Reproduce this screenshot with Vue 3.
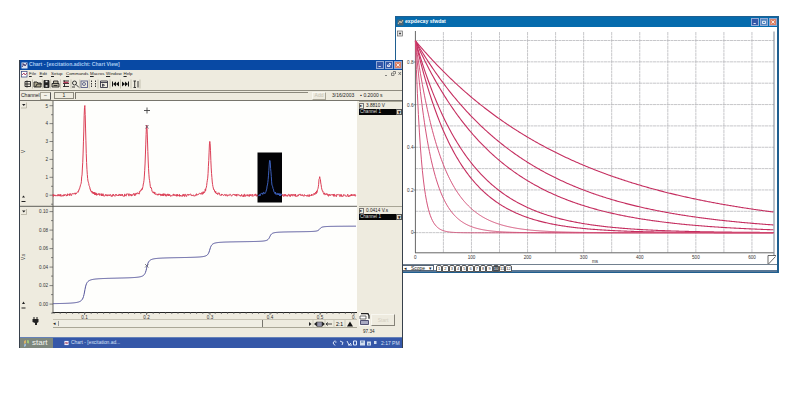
<script setup>
// Two desktop windows: exponential decay plot behind, chart recorder in front

const menus = [
  { t: "File", w: 10.5 },
  { t: "Edit", w: 11.5 },
  { t: "Setup", w: 15 },
  { t: "Commands", w: 24 },
  { t: "Macros", w: 16 },
  { t: "Window", w: 17.5 },
  { t: "Help", w: 10 },
];

// small repeatable noise so the trace always looks the same
let seed = 7;
const noise = () => {
  seed = (seed * 16807) % 2147483647;
  return seed / 2147483647 - 0.5;
};

const peaks = [
  { x: 84.7, h: 90, step: 26 },
  { x: 146.7, h: 71, step: 20.7 },
  { x: 209.8, h: 54, step: 16 },
  { x: 269.8, h: 36, step: 10 },
  { x: 319.7, h: 18.5, step: 5.6 },
];

const trace = (from, to) => {
  const pts = [];
  for (let x = from; x <= to; x += 0.35) {
    let y = 195.6 + noise() * 2.6;
    for (const p of peaks) y -= (p.h * 2.2) / (2.2 + (x - p.x) ** 2);
    pts.push(x.toFixed(2) + "," + y.toFixed(2));
  }
  return pts.join(" ");
};
const pulseTrace = trace(53, 356);
const selectedTrace = trace(258, 281.5);

const integral = (() => {
  const pts = [];
  for (let x = 53; x <= 356; x += 0.5) {
    let y = 304.2;
    for (const p of peaks) y -= p.step * (0.5 + Math.atan((x - p.x) / 1.5) / Math.PI);
    pts.push(x + "," + y.toFixed(2));
  }
  return pts.join(" ");
})();

const upperTicks = [5, 4, 3, 2, 1, 0].map((n) => ({ n, y: 195.2 - n * 17.9 }));
const lowerTicks = ["0.10", "0.08", "0.06", "0.04", "0.02", "0.00"].map((n, i) => ({
  n,
  y: 211.6 + i * 18.5,
}));
const timeTicks = [
  { n: "0.1", x: 84.5 },
  { n: "0.2", x: 146.5 },
  { n: "0.3", x: 210 },
  { n: "0.4", x: 270 },
  { n: "0.5", x: 320 },
  { n: "0.", x: 354 },
];
const minorTimes = Array.from({ length: 49 }, (_, i) => 54 + i * 6.2).filter((x) => x < 356);

// decay plot
const decays = [161, 112, 86, 55.3, 44.3, 27, 16.3, 6.2].map((tau) => {
  const pts = [];
  for (let x = 0; x <= 358.5; x += 1) {
    pts.push(415.4 + x + "," + (232.8 - 192 * Math.exp(-x / tau)).toFixed(2));
  }
  return pts.join(" ");
});
const gridX = Array.from({ length: 12 }, (_, i) => 443.4 + i * 28.05);
const gridY = Array.from({ length: 10 }, (_, i) => 40.5 + i * 21.35);
const decayY = [
  { n: "0.8", y: 62 },
  { n: "0.6", y: 104.7 },
  { n: "0.4", y: 147.3 },
  { n: "0.2", y: 190 },
  { n: "0", y: 232.6 },
];
const decayX = [0, 100, 200, 300, 400, 500, 600];
const pages = Array.from({ length: 12 }, (_, i) => i + 1);
</script>

<template>
  <div class="desktop">
    <section class="win decay">
      <header class="bar">
        <svg class="appicon" viewBox="0 0 7 7">
          <rect x="0.5" y="0.5" width="6" height="6" fill="#4b6675" />
          <path d="M1 5L3 2l1 2 2-3" stroke="#d5c4ae" fill="none" />
        </svg>
        <span class="caption">expdecay sfwdat</span>
        <span class="btn"><svg viewBox="0 0 8 8"><path d="M2 6h3" /></svg></span>
        <span class="btn lit"><svg viewBox="0 0 8 8"><path d="M2 3h4v3H2z" /></svg></span>
        <span class="btn close"><svg viewBox="0 0 8 8"><path d="M2 2l4 4M6 2L2 6" /></svg></span>
      </header>

      <svg class="plot" viewBox="397 28 379 236">
        <rect x="397.5" y="31" width="5" height="5" fill="#e8e8e8" stroke="#666" stroke-width="0.7" />
        <path d="M399 33h2l-1 1.4z" fill="#222" stroke="#222" stroke-width="0.4" />
        <g class="grid">
          <line v-for="x in gridX" :key="'x' + x" :x1="x" :x2="x" y1="32" y2="253" />
          <line v-for="y in gridY" :key="'y' + y" x1="415" x2="774" :y1="y" :y2="y" />
        </g>
        <path d="M415.4 31V253M415 252.8H774" class="axis" />
        <path d="M774 31.5V256" stroke="#7d8794" stroke-width="1" />
        <polyline v-for="(d, i) in decays" :key="i" :points="d" class="decayline" :class="{ faint: i > 4 }" />
        <g class="num">
          <text v-for="t in decayY" :key="t.n" x="413.5" :y="t.y + 1.8" text-anchor="end">{{ t.n }}</text>
          <text v-for="n in decayX" :key="n" :x="415.4 + n * 0.561" y="258.8" text-anchor="middle">{{ n }}</text>
          <text x="595" y="262.6" text-anchor="middle">ms</text>
        </g>
        <path v-for="t in decayY" :key="'t' + t.n" :d="`M413.5 ${t.y}h2`" stroke="#555" stroke-width="0.7" />
        <path d="M768 264v-8.5h8M768.5 264l7-7.5" fill="none" stroke="#444" stroke-width="0.8" />
      </svg>

      <footer class="pages">
        <span class="scope"><i>◂</i> Scope <i class="arrow">▾</i></span>
        <span v-for="p in pages" :key="p" class="page" :class="{ on: p === 10 }">{{ p }}</span>
      </footer>
    </section>

    <section class="win chart">
      <header class="bar">
        <svg class="appicon" viewBox="0 0 7 7">
          <rect x="0.5" y="0.5" width="6" height="6" fill="#dce3ef" />
          <path d="M1 5l2-3 1 2 2-3M1 2h2" stroke="#423c72" fill="none" />
        </svg>
        <span class="caption">Chart - [excitation.adicht: Chart View]</span>
        <span class="btn"><svg viewBox="0 0 8 8"><path d="M2 6h3" /></svg></span>
        <span class="btn"><svg viewBox="0 0 8 8"><path d="M2 4h3v2H2zM4 2h2v2" /></svg></span>
        <span class="btn close"><svg viewBox="0 0 8 8"><path d="M2 2l4 4M6 2L2 6" /></svg></span>
      </header>

      <nav class="menu">
        <svg class="appicon" viewBox="0 0 7 7">
          <rect x="0.5" y="0.5" width="5.5" height="5.5" fill="#fff" stroke="#33417c" stroke-width="0.7" />
          <path d="M1 4l2-2 1 2 2-2" stroke="#a02f50" stroke-width="0.8" fill="none" />
        </svg>
        <span v-for="m in menus" :key="m.t" :style="{ width: m.w + 'px' }"><u>{{ m.t[0] }}</u>{{ m.t.slice(1) }}</span>
        <svg class="mdi" viewBox="0 0 18 8">
          <path d="M1 5.5h2M7.5 3h2.5v2.5H7.5zM9 1.5h2.5v2.5M14.5 2l2.5 3M17 2l-2.5 3" />
        </svg>
      </nav>

      <div class="tools">
        <svg viewBox="0 0 120 10">
          <g fill="none" stroke="#222" stroke-width="0.9">
            <path d="M3 1.5v7M1 2.5h5.5v5H1zM1 5h5.5" />
            <path d="M10 3h3l1 1h3v4h-7zM11.5 8l1.500-3h5" fill="#aaa58c" />
            <path d="M20 1.500h5v7h-5z" fill="#222" />
            <path d="M21.500 2.500h2M21.500 7h2" stroke="#eee" stroke-width="1.600" />
            <path d="M28 4.500h7v3.500h-7zM29.500 4.500V2H34v2.500M29.500 6.500h4" fill="#bdb8a5" />
            <path d="M39 2h6M39 4.500h6M39 7.500h6M40.500 1.500V8" />
            <path d="M39.500 3.500h5" stroke="#bd3d5d" stroke-width="1.400" />
            <circle cx="50.500" cy="4" r="2" />
            <path d="M52 5.500l3 3M48 8h3" />
            <rect x="57" y="2" width="6.500" height="6.500" stroke="#555b87" />
            <circle cx="60" cy="5" r="1.500" stroke="#555b87" />
            <path d="M67.500 1.500v7M71.500 1.500v7" stroke-dasharray="1.500 1" />
            <path d="M76.500 2h7v6.500h-7zM76.500 3.500h7M78.500 5l2 1.200-2 1.200z" stroke="#334" />
            <path d="M114 2v6.500M109.500 2h2.500M110.700 2v6M109.500 8.500h2.500" />
          </g>
          <g fill="#111">
            <path d="M88 2.500h1v5h-1zM92 2.500v5l-3-2.500zM95 2.500v5L92 5z" />
            <path d="M98 2.500v5l3-2.500zM101 2.500v5l3-2.500zM104 2.500h1v5h-1z" />
          </g>
          <path d="M8.500 0.500v9M18.300 0.500v9M26.700 0.500v9M36.500 0.500v9M47 0.500v9M55.800 0.500v9M65.200 0.500v9M74 0.500v9M86 0.500v9M96.500 0.500v9M107 0.500v9M116 0.500v9" stroke="#aaa694" stroke-width="0.600" />
        </svg>
      </div>

      <div class="channel">
        <span class="lbl">Channel:</span>
        <span class="pick">–</span>
        <span class="one">1</span>
        <span class="comment"></span>
        <span class="add">Add</span>
        <span class="date">3/16/2003</span>
        <span class="rate">▪ 0.2000 s</span>
      </div>

      <div class="work">
        <svg class="graphs" viewBox="20 101 337 218">
          <rect x="53" y="101" width="304" height="211" fill="#fefefc" />
          <path d="M20 206.3H357" stroke="#4d4d48" stroke-width="0.9" />
          <path d="M53 101V312.5" stroke="#55554f" stroke-width="0.9" />
          <path d="M52.5 312.5H357" stroke="#222" stroke-width="1" />

          <g class="num">
            <text v-for="t in upperTicks" :key="t.n" x="48" :y="t.y + 1.8" text-anchor="end">{{ t.n }}</text>
            <text v-for="t in lowerTicks" :key="t.n" x="48" :y="t.y + 1.7" text-anchor="end">{{ t.n }}</text>
            <text v-for="t in timeTicks" :key="t.n" :x="t.x" y="318.8" text-anchor="middle">{{ t.n }}</text>
            <text transform="translate(24.5 153) rotate(-90)">V</text>
            <text transform="translate(24.5 260) rotate(-90)">V.s</text>
          </g>
          <g stroke="#555" stroke-width="0.7">
            <path v-for="t in upperTicks" :key="'u' + t.n" :d="`M49.5 ${t.y}h3.5M51 ${t.y + 9}h2`" />
            <path v-for="t in lowerTicks" :key="'l' + t.n" :d="`M49.5 ${t.y}h3.5M51 ${t.y + 9}h2`" />
            <path v-for="x in minorTimes" :key="x" :d="`M${x} 312v2`" />
            <path v-for="t in timeTicks" :key="'x' + t.n" :d="`M${t.x} 312v3`" />
          </g>

          <!-- channel menus and scale arrows -->
          <g fill="#222">
            <path d="M22 104h3.5l-1.7 2zM22 210.5h3.5l-1.7 2z" />
            <path d="M22 197.5l1.5-2 1.5 2zM21.5 201h4v1h-4zM22 304l1.5-2.5 1.5 2.5zM21.5 307.5h4v1h-4z" />
          </g>
          <path d="M21 108h5.5v-5.5M21 214.5h5.5V209" fill="none" stroke="#aaa696" stroke-width="0.7" />

          <polyline :points="pulseTrace" class="pulse" />
          <rect x="257.5" y="152.5" width="24.5" height="50" fill="#020205" />
          <polyline :points="selectedTrace" class="pulse sel" />
          <polyline :points="integral" class="integral" />
          <path d="M144 110.5h6M147 107.5v6" stroke="#444" stroke-width="0.9" />
          <path d="M145.500 125l3 3.500M148.500 125l-3 3.500M145 264l3.500 3.500M148.500 264l-3.500 3.500" stroke="#556" stroke-width="0.7" />
        </svg>

        <aside class="side">
          <div v-for="v in ['3.8810 V', '0.0414 V.s']" :key="v" class="readout">
            <div class="value"><b>▸</b>{{ v }}</div>
            <div class="chan"><span>Channel 1</span><b>▾</b></div>
          </div>
        </aside>
      </div>

      <div class="lower">
        <svg class="plug" viewBox="0 0 33 9">
          <path d="M13.5 1h1v2h2V1h1v2h1v3l-1.5 1v2h-2V7l-2.500-1V3h1z" fill="#222" />
        </svg>
        <div class="scroll">
          <span class="left">◂</span>
          <span class="thumb"></span>
          <svg viewBox="0 0 50 8">
            <path d="M2 2v4l2.5-2zM7 4l3-2.5v5zM15 1.5v5L18 4z" fill="#222" />
            <path d="M10 2h5v4.500h-5z" fill="#9292a8" stroke="#444" stroke-width="0.6" />
            <path d="M19 4h6M21 2.5L19 4l2 1.5" stroke="#333" stroke-width="0.9" fill="none" />
            <text x="29" y="6" font-size="5">2:1</text>
            <path d="M40 6.5l3-5 3 5z" fill="#111" />
            <path d="M6 0v8M18 0v8M27 0v8M38 0v8" stroke="#bbb8a8" stroke-width="0.6" />
          </svg>
        </div>
      </div>
      <div class="status"><span>97.34</span></div>
      <div class="start">
        <svg viewBox="0 0 11 13">
          <rect width="11" height="13" fill="#faf9f4" />
          <path d="M2 0.700h7l1 2v3" fill="none" stroke="#222" stroke-width="1.3" />
          <path d="M1 3h6v3H1z" fill="#fff" stroke="#333" stroke-width="0.7" />
          <path d="M1.5 7.5h8v4h-8z" fill="#a9aac3" stroke="#525274" />
        </svg>
        <span>Start</span>
      </div>

      <footer class="task">
        <span class="startbtn">
          <svg viewBox="0 0 7 8"><path d="M1 2l2-1v3l-2 1z" fill="#d9b269" /><path d="M4 1l2 .5v3l-2-.5z" fill="#a2c779" /><path d="M1 5.5l2-1V7l-2 1z" fill="#9abbd6" /></svg>
          start
        </span>
        <span class="running">
          <svg viewBox="0 0 6 6"><path d="M0.5 0.5h5v5h-5z" fill="#eef" /><path d="M1 4l1.5-2 1 2 1.5-2" stroke="#a13550" fill="none" /></svg>
          Chart - [excitation.ad...
        </span>
        <svg class="tray" viewBox="0 0 46 8">
          <g fill="none" stroke="#dce7fa" stroke-width="1">
            <path d="M3 1.5L1 4l2 2.5M3 3h1.5M8 2l3 1.5-1 2.5" />
            <path d="M15 2l2 4 2-2M16 6h4M21.5 2h3v4h-3z" />
          </g>
          <path d="M28 1.5h5v5h-5zM35 2.5h4v4h-4zM42 2h2.5v3H42z" fill="#cfdcef" />
          <path d="M29 3h2.5M36 5h2" stroke="#436b9f" />
        </svg>
        <span class="clock">2:17 PM</span>
      </footer>
    </section>
  </div>
</template>

<style>
body {
  margin: 0;
  background: #fff;
}
</style>

<style scoped>
.desktop {
  position: relative;
  width: 800px;
  height: 400px;
  overflow: hidden;
  background: #fff;
  font-family: "Liberation Sans", Arial, sans-serif;
  font-size: 5px;
  line-height: 1;
  color: #222;
}
.desktop * {
  box-sizing: border-box;
}
svg {
  display: block;
  flex: none;
}
.win {
  position: absolute;
  display: flex;
  flex-direction: column;
  overflow: hidden;
  white-space: nowrap;
}
.decay {
  left: 395px;
  top: 16px;
  width: 384px;
  height: 257px;
  background: #fff;
  border: 1px solid #1f5f90;
  border-width: 1px 2px 1px 1px;
}
.chart {
  left: 19px;
  top: 60px;
  width: 384px;
  height: 288px;
  background: #eeebdf;
  border: 1px solid #37404b;
  border-width: 0 1px 0 1px;
}

/* title bars */
.bar {
  display: flex;
  flex: none;
  align-items: center;
  height: 10px;
  color: #fff;
  font-weight: 700;
}
.decay .bar {
  background: #056bad;
}
.chart .bar {
  background: #0849a4;
}
.appicon {
  width: 7px;
  height: 7px;
  margin: 0 1px;
}
.caption {
  flex: 1;
  font-size: 5.1px;
}
.chart .caption {
  color: #a9ccf2;
}
.btn {
  width: 8px;
  height: 8px;
  margin-right: 1px;
  background: #3558a8;
  border: 0.5px solid #91a9d6;
}
.btn.lit {
  background: #5585bf;
}
.btn.close {
  background: #dc8064;
  margin-right: 0;
}
.btn svg {
  width: 100%;
  height: 100%;
}
.btn path {
  fill: none;
  stroke: #fff;
  stroke-width: 1.1;
}

/* decay window */
.plot {
  width: 379px;
  height: 236px;
  margin: 1px 0 0 1px;
}
.grid line {
  stroke: #b9b9bd;
  stroke-width: 0.8;
  stroke-dasharray: 3 0.5;
}
.axis {
  stroke: #666;
  stroke-width: 1;
  fill: none;
}
.decayline {
  fill: none;
  stroke: #c52f60;
  stroke-width: 1.1;
}
.decayline.faint {
  stroke: #d14a73;
  stroke-width: 0.95;
}
.num text {
  font-size: 4.6px;
  fill: #333;
}
.pages {
  display: flex;
  flex: 1;
  align-items: center;
  padding-left: 6px;
  background: linear-gradient(#71808f 0, #71808f 1px, #fff 1px, #fff 6px, #587796 6px);
}
.scope {
  display: flex;
  align-items: center;
  justify-content: space-between;
  width: 32px;
  height: 6px;
  margin-right: 2px;
  padding: 0 1px;
  border: 1px solid #566475;
  background: #fff;
}
.scope i {
  font-style: normal;
}
.page {
  width: 6.3px;
  height: 7px;
  border: 0.5px solid #555;
  border-radius: 2px 2px 0 0;
  background: #fff;
  font-size: 4px;
  line-height: 6px;
  text-align: center;
}
.page.on {
  background: #3e4855;
  color: #fff;
}

/* chart window chrome */
.menu {
  display: flex;
  flex: none;
  align-items: center;
  height: 8px;
  font-size: 4.4px;
}
.menu u {
  text-decoration-thickness: 0.4px;
}
.mdi {
  width: 18px;
  height: 8px;
  margin-left: auto;
}
.mdi path {
  fill: none;
  stroke: #555;
  stroke-width: 0.7;
}
.tools {
  flex: none;
  height: 13px;
  padding: 1px 0 0 4px;
  border-bottom: 1px solid #8f8c80;
}
.tools svg {
  width: 120px;
  height: 10px;
}
.channel {
  display: flex;
  flex: none;
  align-items: center;
  height: 10px;
  border-bottom: 1px solid #77756c;
}
.lbl {
  width: 20px;
  padding-left: 1px;
}
.pick {
  width: 11px;
  height: 8px;
  border: 1px solid #aaa697;
  border-right-color: #555;
  text-align: center;
  background: #f4f2e8;
}
.one {
  width: 20px;
  height: 7px;
  margin-left: 3px;
  border: 1px solid #8b887c;
  text-align: center;
}
.comment {
  width: 233px;
  height: 7px;
  margin-left: 1px;
  border-top: 1px solid #8b887c;
  border-left: 1px solid #77746a;
}
.add {
  width: 14px;
  height: 8px;
  margin-left: 4px;
  border: 1px solid #f8f7f0;
  border-right-color: #aaa697;
  border-bottom-color: #aaa697;
  color: #c5c1b3;
  text-align: center;
}
.date {
  margin-left: 6px;
}
.rate {
  margin-left: 6px;
}
.work {
  display: flex;
  flex: none;
  height: 218px;
}
.graphs {
  width: 337px;
  height: 218px;
}
.pulse {
  fill: none;
  stroke: #dc3f56;
  stroke-width: 1;
}
.pulse.sel {
  stroke: #3c60bd;
}
.integral {
  fill: none;
  stroke: #53539a;
  stroke-width: 1;
}
.side {
  display: grid;
  grid-template-rows: 105px 113px;
  width: 45px;
  padding-left: 2px;
}
.readout {
  padding-top: 1px;
  border-top: 1px solid #a8a596;
}
.value {
  display: flex;
  align-items: center;
  gap: 2px;
  height: 6px;
  font-size: 4.7px;
}
.value b {
  width: 5px;
  border: 0.5px solid #777;
  font-size: 4px;
}
.chan {
  display: flex;
  height: 6px;
  background: #050505;
  color: #ddd;
  font-size: 4.6px;
  line-height: 6px;
}
.chan span {
  flex: 1;
  padding-left: 1px;
}
.chan b {
  width: 6px;
  background: #ddd9cb;
  border: 0.5px solid #555;
  color: #222;
  line-height: 5px;
  text-align: center;
}

/* scroll strip and status */
.lower {
  display: flex;
  flex: none;
  height: 9px;
}
.plug {
  width: 33px;
  height: 9px;
  margin-top: -3px;
}
.scroll {
  display: flex;
  align-items: center;
  width: 304px;
  border-top: 1px solid #c6c2b3;
  border-bottom: 1px solid #aaa797;
}
.left {
  width: 6px;
  border-right: 1px solid #999;
}
.thumb {
  width: 204px;
  height: 7px;
  border-right: 1px solid #77756d;
  background: #f0eee4;
}
.scroll svg {
  width: 50px;
  height: 8px;
  margin-left: auto;
}
.status {
  flex: none;
  height: 9px;
  padding: 2px 0 0 343px;
  font-size: 4.6px;
}
.start {
  position: absolute;
  left: 339px;
  top: 253px;
  display: flex;
  align-items: center;
  gap: 1px;
}
.start svg {
  width: 11px;
  height: 13px;
}
.start span {
  width: 24px;
  height: 12px;
  border: 1px solid #f8f7f0;
  border-right-color: #858278;
  border-bottom-color: #858278;
  color: #d2cebf;
  line-height: 10px;
  text-align: center;
}
.task {
  display: flex;
  flex: 1;
  align-items: center;
  margin: 0 -1px;
  background: #3557a8;
  border-top: 1px solid #6581b8;
  color: #d7e2f7;
}
.startbtn {
  display: flex;
  align-items: center;
  gap: 2px;
  width: 34px;
  height: 100%;
  padding-left: 4px;
  background: #7d877d;
  color: #f2f4ef;
  font-size: 8px;
}
.startbtn svg {
  width: 7px;
  height: 8px;
}
.running {
  display: flex;
  align-items: center;
  gap: 2px;
  margin-left: 11px;
  font-size: 4.9px;
}
.running svg {
  width: 5px;
  height: 6px;
}
.tray {
  width: 46px;
  height: 8px;
  margin-left: auto;
}
.clock {
  width: 25px;
  padding-left: 3px;
}
</style>
